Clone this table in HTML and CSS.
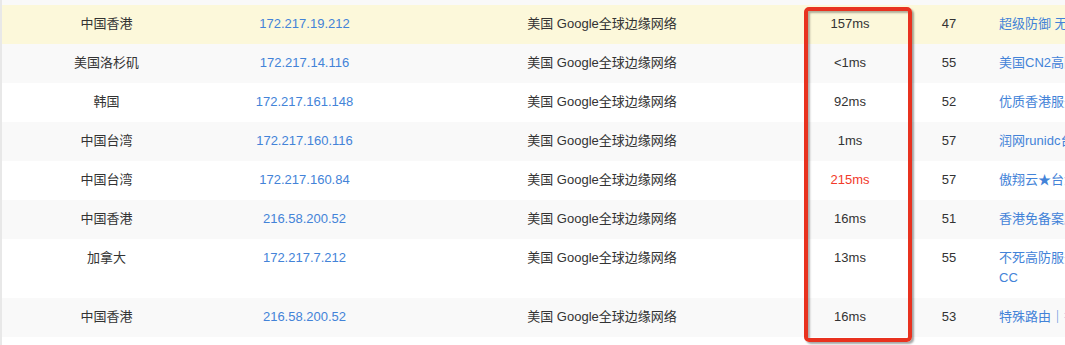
FILE: index.html
```html
<!DOCTYPE html>
<html lang="zh-CN">
<head>
<meta charset="utf-8">
<title>Ping</title>
<link rel="stylesheet" href="styles.css">
</head>
<body>
<div class="wrap">
  <div class="prev-row"></div>
  <table class="result">
    <colgroup>
      <col class="c1"><col class="c2"><col class="c3"><col class="c4"><col class="c5"><col class="c6">
    </colgroup>
    <tbody>
      <tr class="hl">
        <td>中国香港</td><td><a class="lnk">172.217.19.212</a></td><td>美国 Google全球边缘网络</td><td class="ms">157ms</td><td>47</td><td class="ad"><a class="lnk">超级防御 无视攻击 香港高防服务器</a></td>
      </tr>
      <tr class="odd">
        <td>美国洛杉矶</td><td><a class="lnk">172.217.14.116</a></td><td>美国 Google全球边缘网络</td><td class="ms">&lt;1ms</td><td>55</td><td class="ad"><a class="lnk">美国CN2高防服务器 低至299元</a></td>
      </tr>
      <tr>
        <td>韩国</td><td><a class="lnk">172.217.161.148</a></td><td>美国 Google全球边缘网络</td><td class="ms">92ms</td><td>52</td><td class="ad"><a class="lnk">优质香港服务器 CN2直连</a></td>
      </tr>
      <tr class="odd">
        <td>中国台湾</td><td><a class="lnk">172.217.160.116</a></td><td>美国 Google全球边缘网络</td><td class="ms">1ms</td><td>57</td><td class="ad"><a class="lnk">润网runidc台湾云服务器</a></td>
      </tr>
      <tr>
        <td>中国台湾</td><td><a class="lnk">172.217.160.84</a></td><td>美国 Google全球边缘网络</td><td class="ms slow">215ms</td><td>57</td><td class="ad"><a class="lnk">傲翔云★台湾原生IP云主机</a></td>
      </tr>
      <tr class="odd">
        <td>中国香港</td><td><a class="lnk">216.58.200.52</a></td><td>美国 Google全球边缘网络</td><td class="ms">16ms</td><td>51</td><td class="ad"><a class="lnk">香港免备案服务器 大带宽</a></td>
      </tr>
      <tr>
        <td>加拿大</td><td><a class="lnk">172.217.7.212</a></td><td>美国 Google全球边缘网络</td><td class="ms">13ms</td><td>55</td><td class="ad"><a class="lnk">不死高防服务器 防御DDOS<br>CC</a></td>
      </tr>
      <tr class="odd">
        <td>中国香港</td><td><a class="lnk">216.58.200.52</a></td><td>美国 Google全球边缘网络</td><td class="ms">16ms</td><td>53</td><td class="ad"><a class="lnk">特殊路由｜香港CN2服务器</a></td>
      </tr>
      <tr>
        <td>&nbsp;</td><td></td><td></td><td class="ms"></td><td></td><td class="ad"></td>
      </tr>
    </tbody>
  </table>
  <div class="mark"></div>
</div>
</body>
</html>
```

FILE: styles.css
```css
html, body {
  margin: 0;
  padding: 0;
  background: #fff;
  overflow: hidden;
}
body {
  font-family: "Liberation Sans", Arial, "Noto Sans CJK SC", sans-serif;
  font-size: 13px;
  color: #333;
}
.wrap {
  position: relative;
  width: 1300px;
  border-left: 2px solid #e8e8e8;
  height: 345px;
}
.prev-row {
  height: 5px;
  background: #f9f9f9;
}
.result {
  border-collapse: collapse;
  table-layout: fixed;
  width: 1298px;
}
.c1 { width: 209px; }
.c2 { width: 187px; }
.c3 { width: 408px; }
.c4 { width: 103px; }
.c5 { width: 80px; }
.c6 { width: 311px; }
.result td {
  padding: 9px 10px 10px;
  line-height: 20px;
  text-align: center;
  vertical-align: top;
  white-space: nowrap;
}
.result td.ms {
  padding-left: 0;
  padding-right: 15px;
}
.result td.ad {
  text-align: left;
}
.result tr.odd td {
  background: #f9f9f9;
}
.result tr.hl td {
  background: #fcf8da;
}
.lnk {
  color: #4383d8;
  text-decoration: none;
}
.slow {
  color: #f23a2a;
}
.mark {
  position: absolute;
  left: 802px;
  top: 7px;
  width: 100px;
  height: 327px;
  border: 4px solid #e8321f;
  border-radius: 5px;
  box-shadow: 2px 2px 2px rgba(0, 0, 0, 0.35), inset 2px 2px 2px rgba(0, 0, 0, 0.3);
}
```
